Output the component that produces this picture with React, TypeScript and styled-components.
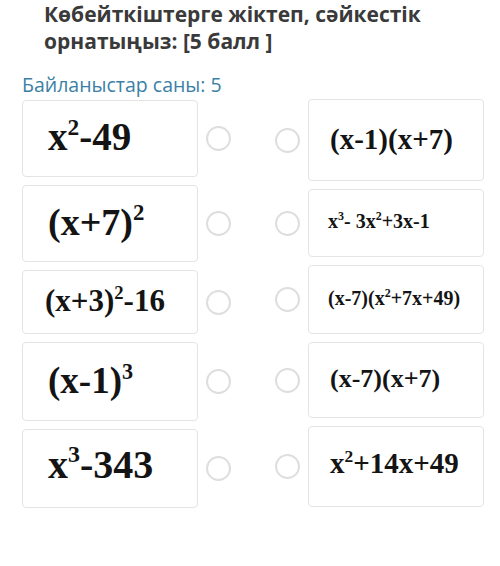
import React from "react";
import styled, { createGlobalStyle } from "styled-components";

const GlobalStyle = createGlobalStyle`
  body {
    margin: 0;
    background: #ffffff;
    font-family: "Open Sans", "Liberation Sans", sans-serif;
  }
`;

const Page = styled.div`
  width: 500px;
  height: 566px;
  overflow: hidden;
  background: #ffffff;
`;

const Title = styled.h1`
  margin: 0;
  padding: 1px 0 0 44px;
  font-size: 21px;
  line-height: 27px;
  font-weight: 700;
  color: #3a3a3a;
`;

const Counter = styled.div`
  margin-top: 18px;
  padding-left: 22px;
  font-size: 19.5px;
  line-height: 24px;
  color: #3b7fa6;
`;

const Board = styled.div`
  display: flex;
  align-items: flex-start;
  gap: 44px;
  padding: 0 0 0 22px;
  margin-top: 2px;
`;

const Column = styled.div<{ $offset: number }>`
  display: flex;
  flex-direction: column;
  gap: 8px;
  margin-top: ${(p) => p.$offset}px;
`;

const Item = styled.div`
  display: flex;
  align-items: center;
  gap: 8px;
`;

const Card = styled.div<{ $height: number; $top: number; $left: number }>`
  box-sizing: border-box;
  width: 176px;
  height: ${(p) => p.$height}px;
  padding: ${(p) => p.$top}px 0 0 ${(p) => p.$left}px;
  border: 1px solid #e4e4e4;
  border-radius: 4px;
  background: #ffffff;
`;

const Formula = styled.div<{ $size: number }>`
  font-family: "Liberation Serif", "Times New Roman", serif;
  font-weight: 700;
  font-size: ${(p) => p.$size}px;
  line-height: 1;
  color: #141414;
  white-space: nowrap;
`;

const Sup = styled.span`
  font-size: 0.6em;
  vertical-align: 0.65em;
  line-height: 0;
`;

const Radio = styled.span`
  box-sizing: border-box;
  flex: none;
  width: 25px;
  height: 25px;
  border: 2px solid #dedede;
  border-radius: 50%;
  background: #ffffff;
`;

interface Expr {
  parts: React.ReactNode;
  size: number;
  top: number;
  left: number;
  height: number;
}

const leftItems: Expr[] = [
  { parts: <>x<Sup>2</Sup>-49</>, size: 39, top: 16, left: 25, height: 77 },
  { parts: <>(x+7)<Sup>2</Sup></>, size: 38, top: 17, left: 25, height: 77 },
  { parts: <>(x+3)<Sup>2</Sup>-16</>, size: 31, top: 14, left: 22, height: 64 },
  { parts: <>(x-1)<Sup>3</Sup></>, size: 37, top: 19, left: 25, height: 79 },
  { parts: <>x<Sup>3</Sup>-343</>, size: 40, top: 15, left: 25, height: 79 },
];

const rightItems: Expr[] = [
  { parts: <>(x-1)(x+7)</>, size: 29, top: 25, left: 21, height: 82 },
  { parts: <>x<Sup>3</Sup>- 3x<Sup>2</Sup>+3x-1</>, size: 20, top: 21, left: 19, height: 68 },
  { parts: <>(x-7)(x<Sup>2</Sup>+7x+49)</>, size: 20, top: 22, left: 19, height: 69 },
  { parts: <>(x-7)(x+7)</>, size: 26, top: 23, left: 21, height: 76 },
  { parts: <>x<Sup>2</Sup>+14x+49</>, size: 29, top: 22, left: 21, height: 81 },
];

export default function App() {
  return (
    <>
      <GlobalStyle />
      <Page>
        <Title>
          Көбейткіштерге жіктеп, сәйкестік
          <br />
          орнатыңыз: [5 балл ]
        </Title>
        <Counter>Байланыстар саны: 5</Counter>
        <Board>
          <Column $offset={1}>
            {leftItems.map((item, i) => (
              <Item key={i}>
                <Card $height={item.height} $top={item.top} $left={item.left}>
                  <Formula $size={item.size}>{item.parts}</Formula>
                </Card>
                <Radio />
              </Item>
            ))}
          </Column>
          <Column $offset={0}>
            {rightItems.map((item, i) => (
              <Item key={i}>
                <Radio />
                <Card $height={item.height} $top={item.top} $left={item.left}>
                  <Formula $size={item.size}>{item.parts}</Formula>
                </Card>
              </Item>
            ))}
          </Column>
        </Board>
      </Page>
    </>
  );
}
